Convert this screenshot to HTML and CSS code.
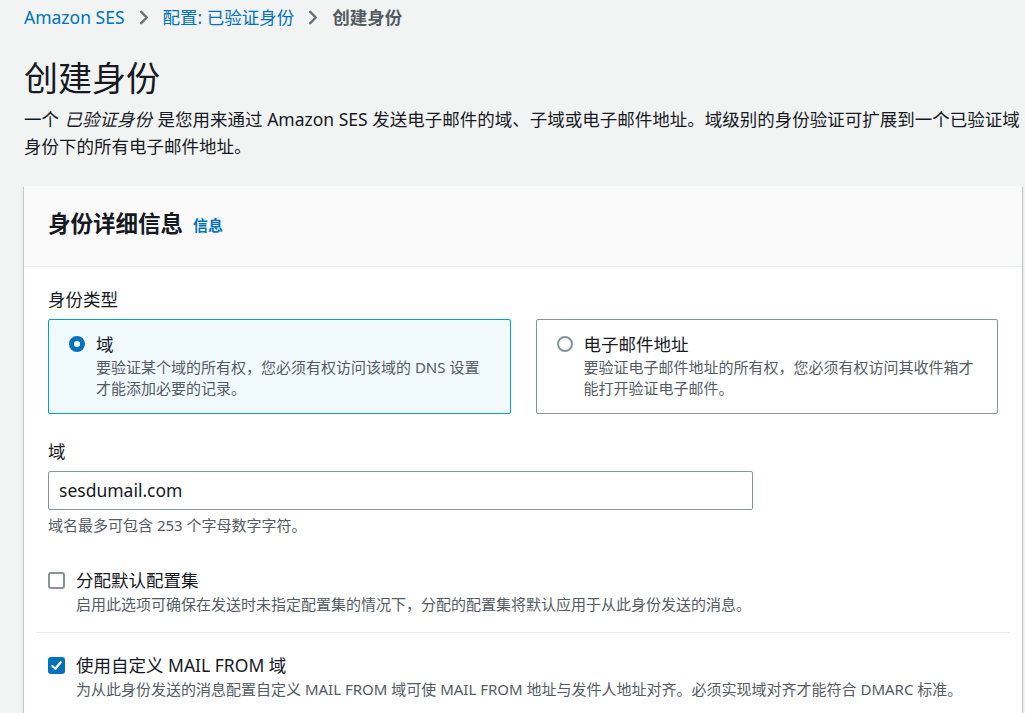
FILE: index.html
```html
<!DOCTYPE html>
<html lang="zh-CN">
<head>
<meta charset="utf-8">
<title>创建身份</title>
<link rel="stylesheet" href="styles.css">
</head>
<body>
<div class="page">
  <nav class="crumbs">
    <a class="crumb-link" href="#">Amazon SES</a>
    <svg class="chev" viewBox="0 0 10 16" width="10" height="15"><polyline points="2,2 8,8 2,14" fill="none" stroke="#687078" stroke-width="2.6" stroke-linecap="round" stroke-linejoin="round"/></svg>
    <a class="crumb-link" href="#">配置: 已验证身份</a>
    <svg class="chev" viewBox="0 0 10 16" width="10" height="15"><polyline points="2,2 8,8 2,14" fill="none" stroke="#687078" stroke-width="2.6" stroke-linecap="round" stroke-linejoin="round"/></svg>
    <span class="crumb-current">创建身份</span>
  </nav>

  <h1 class="title">创建身份</h1>
  <p class="lead">一个 <em>已验证身份</em> 是您用来通过 Amazon SES 发送电子邮件的域、子域或电子邮件地址。域级别的身份验证可扩展到一个已验证域身份下的所有电子邮件地址。</p>

  <section class="panel">
    <header class="panel-head">
      <h2 class="panel-title">身份详细信息</h2>
      <a class="info" href="#">信息</a>
    </header>
    <div class="panel-body">
      <div class="field-label">身份类型</div>
      <div class="cards">
        <div class="card card-on">
          <span class="radio radio-on"></span>
          <div class="card-text">
            <div class="card-label">域</div>
            <div class="card-desc">要验证某个域的所有权，您必须有权访问该域的 DNS 设置才能添加必要的记录。</div>
          </div>
        </div>
        <div class="card">
          <span class="radio"></span>
          <div class="card-text">
            <div class="card-label">电子邮件地址</div>
            <div class="card-desc">要验证电子邮件地址的所有权，您必须有权访问其收件箱才能打开验证电子邮件。</div>
          </div>
        </div>
      </div>

      <div class="field-label field-gap">域</div>
      <div class="input">sesdumail.com</div>
      <div class="hint">域名最多可包含 253 个字母数字字符。</div>

      <div class="check-row first">
        <span class="box"></span>
        <div class="check-text">
          <div class="check-label">分配默认配置集</div>
          <div class="check-desc">启用此选项可确保在发送时未指定配置集的情况下，分配的配置集将默认应用于从此身份发送的消息。</div>
        </div>
      </div>
      <hr class="divider">
      <div class="check-row">
        <span class="box box-on"><svg viewBox="0 0 14 14" width="13" height="13"><polyline points="2.5,7.5 5.8,10.5 11.5,3.5" fill="none" stroke="#fff" stroke-width="2.4" stroke-linecap="round" stroke-linejoin="round"/></svg></span>
        <div class="check-text">
          <div class="check-label">使用自定义 MAIL FROM 域</div>
          <div class="check-desc">为从此身份发送的消息配置自定义 MAIL FROM 域可使 MAIL FROM 地址与发件人地址对齐。必须实现域对齐才能符合 DMARC 标准。</div>
        </div>
      </div>
    </div>
  </section>
</div>
</body>
</html>
```

FILE: styles.css
```css
html, body {
  margin: 0;
  padding: 0;
  background: #f2f3f3;
}
body {
  font-family: "Noto Sans", "Noto Sans CJK SC", sans-serif;
  color: #16191f;
  font-size: 17.5px;
  overflow: hidden;
}
.page {
  padding: 5px 3px 0 24px;
}
.crumbs {
  display: flex;
  align-items: center;
  gap: 14px;
  height: 24px;
  line-height: 24px;
}
.crumb-link {
  color: #0073bb;
  text-decoration: none;
}
.crumb-current {
  color: #545b64;
  font-weight: 700;
}
.chev {
  display: block;
}
.title {
  margin: 29px 0 0;
  font-size: 34px;
  line-height: 40px;
  font-weight: 400;
}
.lead {
  margin: 8px 0 0;
  line-height: 27px;
  color: #16191f;
}
.lead em {
  font-style: italic;
  padding: 0 1px;
}
.panel {
  margin-top: 26px;
  background: #fff;
  box-shadow: 0 1px 1px 0 rgba(0, 28, 36, .3), 1px 1px 1px 0 rgba(0, 28, 36, .15), -1px 1px 1px 0 rgba(0, 28, 36, .15);
}
.panel-head {
  display: flex;
  align-items: center;
  background: #fafafa;
  border-bottom: 1px solid #eaeded;
  padding: 22px 24px 26px;
  height: 32px;
}
.panel-title {
  margin: 0;
  font-size: 22.5px;
  font-weight: 700;
  line-height: 32px;
}
.info {
  margin-left: 10px;
  color: #0073bb;
  font-weight: 700;
  font-size: 15px;
  text-decoration: none;
}
.panel-body {
  padding: 20px 24px 30px;
}
.field-label {
  line-height: 24px;
}
.field-gap {
  margin-top: 25px;
}
.cards {
  display: grid;
  grid-template-columns: 1fr 1fr;
  gap: 25px;
  margin-top: 8px;
}
.card {
  display: flex;
  gap: 11px;
  border: 1px solid #879596;
  border-radius: 2px;
  padding: 12px 20px 14px;
  min-height: 67px;
}
.card-on {
  border-color: #00a1c9;
  background: #f1faff;
}
.radio {
  flex: none;
  box-sizing: border-box;
  width: 16px;
  height: 16px;
  margin-top: 4px;
  border-radius: 50%;
  border: 2px solid #879596;
  background: #fff;
}
.radio-on {
  border: 5px solid #0073bb;
}
.card-label {
  line-height: 24px;
}
.card-desc {
  margin-top: 1px;
  font-size: 15px;
  line-height: 21px;
  color: #545b64;
}
.input {
  margin-top: 8px;
  box-sizing: border-box;
  width: 705px;
  height: 39px;
  border: 1px solid #879596;
  border-radius: 2px;
  padding: 0 10px;
  line-height: 37px;
  background: #fff;
}
.hint {
  margin-top: 5px;
  font-size: 15px;
  line-height: 21px;
  color: #545b64;
}
.check-row {
  display: flex;
  gap: 11px;
}
.check-row.first {
  margin-top: 32px;
}
.box {
  flex: none;
  box-sizing: border-box;
  width: 17px;
  height: 17px;
  margin-top: 4px;
  border: 2px solid #879596;
  border-radius: 3px;
  background: #fff;
  display: flex;
  align-items: center;
  justify-content: center;
}
.box-on {
  border: none;
  background: #0073bb;
}
.box svg {
  display: block;
}
.check-label {
  line-height: 24px;
}
.check-desc {
  margin-top: 2px;
  font-size: 15px;
  line-height: 21px;
  color: #545b64;
}
.divider {
  margin: 17px -12px 20px;
  border: none;
  border-top: 1px solid #eaeded;
  height: 0;
}
```
